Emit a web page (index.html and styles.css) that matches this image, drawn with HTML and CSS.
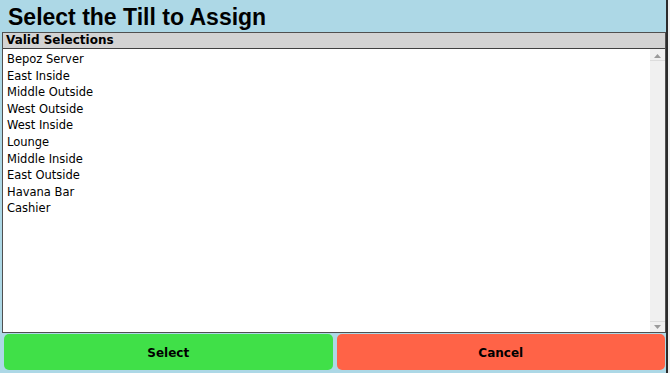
FILE: index.html
```html
<!DOCTYPE html>
<html>
<head>
<meta charset="utf-8">
<link rel="stylesheet" href="styles.css">
</head>
<body>
<div class="app">
  <div class="title">Select the Till to Assign</div>
  <div class="panel">
    <div class="panel-header">Valid Selections</div>
    <div class="panel-body">
      <ul class="list">
        <li>Bepoz Server</li>
        <li>East Inside</li>
        <li>Middle Outside</li>
        <li>West Outside</li>
        <li>West Inside</li>
        <li>Lounge</li>
        <li>Middle Inside</li>
        <li>East Outside</li>
        <li>Havana Bar</li>
        <li>Cashier</li>
      </ul>
      <div class="scrollbar">
        <div class="sb-btn"><svg width="7" height="4" viewBox="0 0 7 4"><path d="M0 4 L3.5 0 L7 4 Z" fill="#9a9a9a"/></svg></div>
        <div class="sb-track"></div>
        <div class="sb-btn"><svg width="7" height="4" viewBox="0 0 7 4"><path d="M0 0 L3.5 4 L7 0 Z" fill="#9a9a9a"/></svg></div>
      </div>
    </div>
  </div>
  <div class="actions">
    <button class="btn btn-select">Select</button>
    <button class="btn btn-cancel">Cancel</button>
  </div>
</div>
</body>
</html>
```
FILE: styles.css
```css
html, body {
  margin: 0;
  padding: 0;
  background: #f0f0f0;
}
.app {
  width: 666px;
  height: 373px;
  background: #add8e6;
  border-right: 2px solid #2b2b2b;
  display: flex;
  flex-direction: column;
  box-sizing: content-box;
}
.title {
  height: 32px;
  padding-left: 8px;
  font-family: "Liberation Sans", Arial, sans-serif;
  font-weight: bold;
  font-size: 23px;
  line-height: 34px;
  color: #000;
  overflow: hidden;
}
.panel {
  margin-left: 2px;
  height: 301px;
  border: 1px solid #505050;
  display: flex;
  flex-direction: column;
  box-sizing: border-box;
  background: #fff;
}
.panel-header {
  height: 15px;
  background: #d3d3d3;
  border-bottom: 1px solid #404040;
  font-family: "DejaVu Sans", sans-serif;
  font-weight: bold;
  font-size: 12px;
  line-height: 15px;
  padding-left: 3px;
  color: #000;
}
.panel-body {
  flex: 1;
  display: flex;
  min-height: 0;
}
.list {
  flex: 1;
  list-style: none;
  margin: 0;
  padding: 2px 0 0 4px;
  font-family: "DejaVu Sans", sans-serif;
  font-size: 11.5px;
  line-height: 16.6px;
  color: #000;
}
.scrollbar {
  width: 15px;
  display: flex;
  flex-direction: column;
  background: #f0f0f0;
  padding-top: 2px;
  padding-bottom: 1px;
}
.sb-btn {
  height: 9px;
  display: flex;
  align-items: center;
  justify-content: center;
  background: #f0f0f0;
  border-bottom: 1px solid #dcdcdc;
}
.sb-btn:last-child {
  border-bottom: none;
  border-top: 1px solid #dcdcdc;
}
.sb-track {
  flex: 1;
}
.actions {
  display: flex;
  gap: 4px;
  padding: 0 1px 0 4px;
  margin-top: 1px;
  height: 36px;
}
.btn {
  flex: 1;
  border: none;
  border-radius: 5px;
  font-family: "DejaVu Sans", sans-serif;
  font-weight: bold;
  font-size: 12px;
  line-height: 38px;
  color: #000;
  padding: 0;
  margin: 0;
}
.btn-select {
  background: #40e048;
}
.btn-cancel {
  background: #ff6347;
}
```
